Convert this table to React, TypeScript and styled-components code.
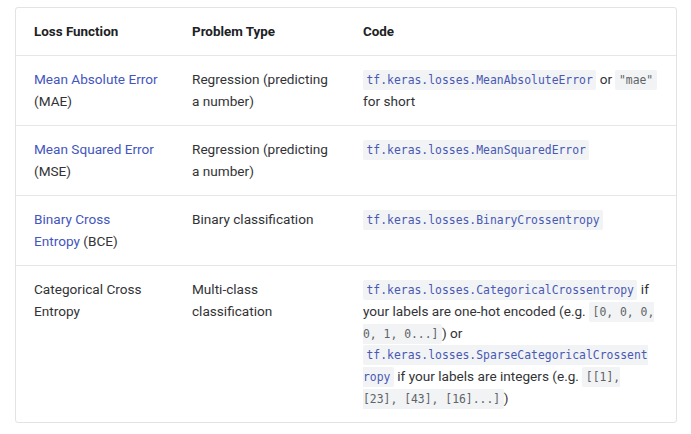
import React from "react";
import styled, { createGlobalStyle } from "styled-components";

const Global = createGlobalStyle`
  html, body { margin: 0; padding: 0; background: #ffffff; }
  body { font-family: Roboto, "Noto Sans", sans-serif; -webkit-font-smoothing: antialiased; }
`;

const Page = styled.div`
  padding: 7px 14px 12px 15px;
`;

const Frame = styled.div`
  border: 1px solid #e3e3e3;
  border-radius: 3px;
  overflow: hidden;
  width: 660px;
`;

const Table = styled.table`
  width: 660px;
  border-collapse: collapse;
  table-layout: fixed;
  font-size: 13.6px;
  line-height: 21.8px;
  color: #333336;
`;

const HeadCell = styled.th`
  text-align: left;
  font-weight: 700;
  font-size: 13.4px;
  color: #202124;
  padding: 12.5px 18px 12.5px 18px;
  vertical-align: top;
`;

const Row = styled.tr`
  border-top: 1px solid #e6e6e6;
`;

const Cell = styled.td<{ $wide?: boolean }>`
  padding: 13px ${(p) => (p.$wide ? "15px" : "16px")} 12.5px 18px;
  vertical-align: top;
`;

const Link = styled.a`
  color: #4456bd;
  text-decoration: none;
`;

const Code = styled.code<{ $plain?: boolean }>`
  font-family: "DejaVu Sans Mono", "Liberation Mono", monospace;
  font-size: 11.4px;
  line-height: 1;
  background: #f1f3f4;
  color: ${(p) => (p.$plain ? "#5f6368" : "#4858b4")};
  padding: 3px 3.5px;
  border-radius: 2px;
`;

export default function App() {
  return (
    <Page>
      <Global />
      <Frame>
        <Table>
          <colgroup>
            <col style={{ width: 158 }} />
            <col style={{ width: 171 }} />
            <col style={{ width: 331 }} />
          </colgroup>
          <thead>
            <tr>
              <HeadCell>Loss Function</HeadCell>
              <HeadCell>Problem Type</HeadCell>
              <HeadCell>Code</HeadCell>
            </tr>
          </thead>
          <tbody>
            <Row>
              <Cell>
                <Link href="#">Mean Absolute Error</Link> (MAE)
              </Cell>
              <Cell>Regression (predicting a number)</Cell>
              <Cell $wide>
                <Code>tf.keras.losses.MeanAbsoluteError</Code> or <Code $plain>"mae"</Code> for short
              </Cell>
            </Row>
            <Row>
              <Cell>
                <Link href="#">Mean Squared Error</Link> (MSE)
              </Cell>
              <Cell>Regression (predicting a number)</Cell>
              <Cell $wide>
                <Code>tf.keras.losses.MeanSquaredError</Code>
              </Cell>
            </Row>
            <Row>
              <Cell>
                <Link href="#">Binary Cross Entropy</Link> (BCE)
              </Cell>
              <Cell>Binary classification</Cell>
              <Cell $wide>
                <Code>tf.keras.losses.BinaryCrossentropy</Code>
              </Cell>
            </Row>
            <Row>
              <Cell>Categorical Cross Entropy</Cell>
              <Cell>Multi-class classification</Cell>
              <Cell $wide>
                <Code>tf.keras.losses.CategoricalCrossentropy</Code> if your labels are one-hot encoded (e.g.{" "}
                <Code $plain>[0, 0, 0, 0, 1, 0...]</Code>) or{" "}
                <Code>
                  tf.keras.losses.SparseCategoricalCrossent
                  <wbr />
                  ropy
                </Code>{" "}
                if your labels are integers (e.g. <Code $plain>[[1], [23], [43], [16]...]</Code>)
              </Cell>
            </Row>
          </tbody>
        </Table>
      </Frame>
    </Page>
  );
}
